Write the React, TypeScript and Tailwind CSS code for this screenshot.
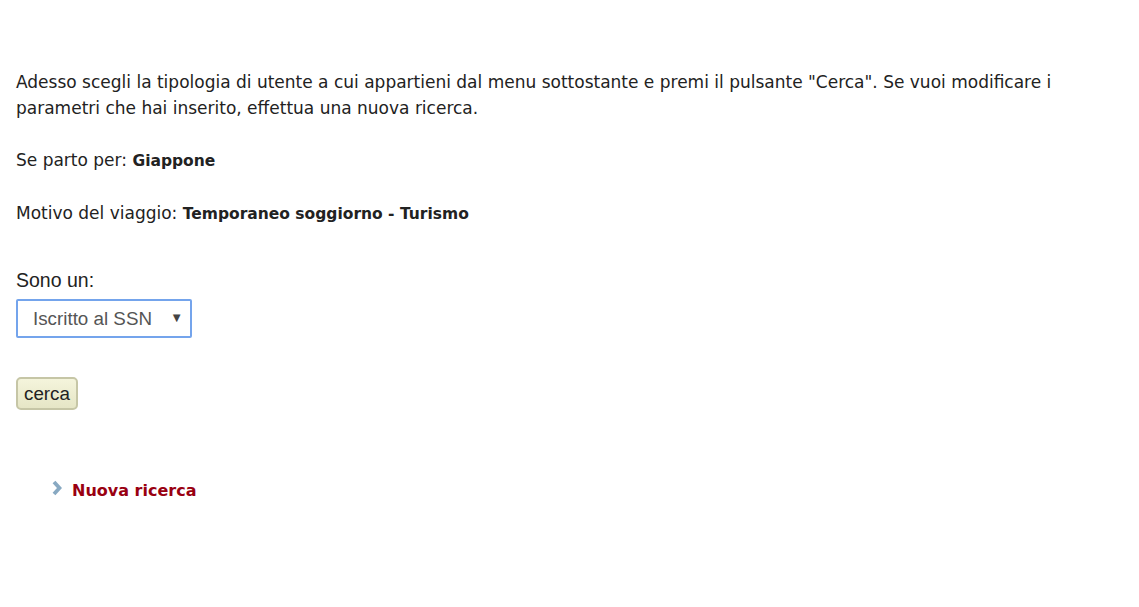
import React from "react";

export default function App() {
  return (
    <div className="min-h-[607px] w-full bg-white text-[#222]">
      <div className="px-4 pt-[69px] font-['DejaVu_Sans',sans-serif] text-[17px] leading-[26px]">
        <p className="max-w-[1090px]">
          Adesso scegli la tipologia di utente a cui appartieni dal menu sottostante e premi il pulsante "Cerca". Se vuoi modificare i parametri che hai inserito, effettua una nuova ricerca.
        </p>
        <p className="mt-[26px]">
          Se parto per: <strong className="text-[15.5px]">Giappone</strong>
        </p>
        <p className="mt-[26px]">
          Motivo del viaggio: <strong className="text-[15.5px]">Temporaneo soggiorno - Turismo</strong>
        </p>
      </div>

      <div className="px-4 pt-[41px] font-['Liberation_Sans',Arial,sans-serif]">
        <label className="block text-[19.5px] leading-[24px] text-[#222]">Sono un:</label>
        <div className="relative mt-[7px] h-[39px] w-[176px] rounded-[2px] border-2 border-[#74a4ec] bg-white">
          <span className="absolute left-[15px] top-[7px] text-[18.8px] leading-[21px] text-[#555]">Iscritto al SSN</span>
          <span className="absolute right-[7px] top-[9px] text-[13px] leading-[16px] text-[#444]">▼</span>
        </div>
        <button className="mt-[39px] h-[33px] rounded-[5px] border-2 border-[#c6c6a6] bg-gradient-to-b from-[#f4f4dc] to-[#e6e6c6] px-[6px] text-[18.8px] leading-[20px] text-[#222]">
          cerca
        </button>
      </div>

      <div className="flex items-center gap-[10px] pl-[52px] pt-[71px] font-['DejaVu_Sans',sans-serif]">
        <svg width="10" height="20" viewBox="0 0 10 20" className="-mt-[6px]">
          <path d="M2 4 L7.5 10 L2 16" fill="none" stroke="#88a9c2" strokeWidth="3.8" />
        </svg>
        <a className="text-[16px] font-bold leading-[20px] text-[#990011]" href="#">Nuova ricerca</a>
      </div>
    </div>
  );
}
